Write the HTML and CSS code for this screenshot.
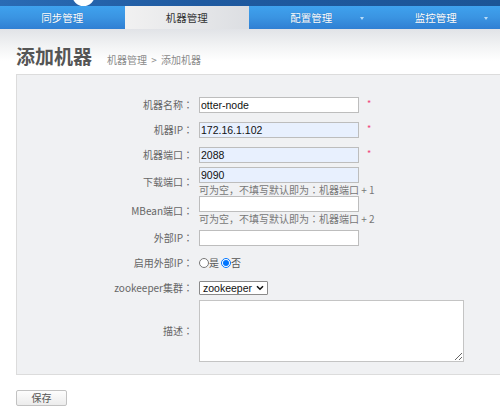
FILE: index.html
```html
<!DOCTYPE html>
<html lang="zh-CN">
<head>
<meta charset="utf-8">
<title>添加机器</title>
<link rel="stylesheet" href="styles.css">
</head>
<body>
<div class="band">
  <span class="logo"></span>
</div>
<nav class="nav">
  <a class="tab">同步管理</a>
  <a class="tab active">机器管理</a>
  <a class="tab drop">配置管理</a>
  <a class="tab drop">监控管理</a>
</nav>
<main class="main">
  <div class="head">
    <h1 class="title">添加机器</h1>
    <span class="crumb">机器管理 &gt; 添加机器</span>
  </div>
  <div class="panel">
    <div class="form">
      <div class="lbl">机器名称<span class="c" lang="zh-TW">：</span></div>
      <div class="fld"><input class="inp" type="text" value="otter-node"><span class="star">*</span></div>

      <div class="lbl">机器IP<span class="c" lang="zh-TW">：</span></div>
      <div class="fld"><input class="inp auto" type="text" value="172.16.1.102"><span class="star">*</span></div>

      <div class="lbl">机器端口<span class="c" lang="zh-TW">：</span></div>
      <div class="fld"><input class="inp auto" type="text" value="2088"><span class="star">*</span></div>

      <div class="lbl">下载端口<span class="c" lang="zh-TW">：</span></div>
      <div class="fld col"><input class="inp auto" type="text" value="9090"><span class="help">可为空，不填写默认即为<span class="c" lang="zh-TW">：</span>机器端口 + 1</span></div>

      <div class="lbl">MBean端口<span class="c" lang="zh-TW">：</span></div>
      <div class="fld col"><input class="inp" type="text" value=""><span class="help">可为空，不填写默认即为<span class="c" lang="zh-TW">：</span>机器端口 + 2</span></div>

      <div class="lbl">外部IP<span class="c" lang="zh-TW">：</span></div>
      <div class="fld"><input class="inp" type="text" value=""></div>

      <div class="lbl">启用外部IP<span class="c" lang="zh-TW">：</span></div>
      <div class="fld radios">
        <label class="opt"><input class="rad" type="radio" name="ext">是</label>
        <label class="opt"><input class="rad" type="radio" name="ext" checked>否</label>
      </div>

      <div class="lbl">zookeeper集群<span class="c" lang="zh-TW">：</span></div>
      <div class="fld">
        <div class="selwrap">
          <select class="sel"><option>zookeeper</option></select>
          <svg class="chev" width="8" height="6" viewBox="0 0 8 6"><path d="M1 1.2 L4 4.2 L7 1.2" fill="none" stroke="#111" stroke-width="1.6"/></svg>
        </div>
      </div>

      <div class="lbl">描述<span class="c" lang="zh-TW">：</span></div>
      <div class="fld"><textarea class="ta"></textarea></div>
    </div>
  </div>
  <div class="actions"><button class="btn" type="button">保存</button></div>
</main>
</body>
</html>
```
FILE: styles.css
```css
* { box-sizing: border-box; }
html, body { margin: 0; padding: 0; }
body {
  font-family: "Noto Sans CJK SC", "Liberation Sans", sans-serif;
  background: #fff;
  color: #555;
  overflow: hidden;
  width: 500px;
}
.band {
  height: 6px;
  background: linear-gradient(90deg, #2a6bb4, #1f5aa0 40%, #1c5596);
  position: relative;
  overflow: hidden;
}
.logo {
  position: absolute;
  left: 72px;
  top: -17px;
  width: 23px;
  height: 23px;
  border-radius: 50%;
  background: #fff;
}
.nav {
  display: flex;
  height: 23px;
  background: linear-gradient(#3fa2ee, #3a94e2 50%, #2f7fd3);
}
.tab {
  width: 124.5px;
  flex: none;
  display: flex;
  align-items: center;
  justify-content: center;
  font-size: 10.5px;
  color: #fff;
  text-shadow: 0 0 1px rgba(0, 40, 100, 0.4);
  position: relative;
}
.tab.active {
  background: linear-gradient(90deg, #f1f1f1, #e7e8ea 50%, #dcdee2);
  color: #333;
  text-shadow: none;
}
.tab.drop::after {
  content: "";
  position: absolute;
  right: 10px;
  top: 11px;
  border-left: 2.5px solid transparent;
  border-right: 2.5px solid transparent;
  border-top: 3px solid #b9dcf8;
}
.main {
  background: linear-gradient(#e1e3e7, #f3f4f5 18px, #fff 32px) no-repeat;
  padding-top: 15px;
}
.head {
  display: flex;
  align-items: baseline;
  gap: 15px;
  padding-left: 16px;
  height: 30px;
}
.title {
  margin: 0;
  font-size: 19px;
  line-height: 24px;
  font-weight: bold;
  color: #555;
}
.crumb {
  font-size: 10px;
  color: #8a8a8a;
  word-spacing: 2px;
}
.panel {
  margin-left: 16px;
  margin-right: -10px;
  background: #f0f1f3;
  border: 1px solid #dcdcdc;
  padding: 17px 0 12px 0;
}
.form {
  display: grid;
  grid-template-columns: 176px 1fr;
  column-gap: 6px;
  grid-auto-rows: minmax(25px, auto);
  align-items: center;
}
.lbl {
  text-align: right;
  font-size: 10px;
  line-height: 14px;
  color: #666;
  white-space: nowrap;
}
.c {
  font-family: "Noto Sans CJK TC", "Noto Sans CJK SC", sans-serif;
}
.fld {
  display: flex;
  align-items: center;
}
.fld.col {
  flex-direction: column;
  align-items: flex-start;
}
.inp {
  width: 160px;
  height: 16px;
  border: 1px solid #bdbdbd;
  background: #fff;
  padding: 0 1px;
  margin: 0;
  font: 10.5px "Liberation Sans", Arial, sans-serif;
  color: #111;
  outline: none;
}
.inp.auto { background: #e8f0fe; }
.star {
  margin-left: 8px;
  color: #f0457a;
  font-size: 9px;
  line-height: 9px;
  position: relative;
  top: -1px;
}
.help {
  font-size: 10px;
  line-height: 13px;
  height: 13px;
  color: #777;
  white-space: nowrap;
}
.radios { gap: 2px; }
.opt {
  display: flex;
  align-items: center;
  font-size: 10px;
  color: #555;
}
.rad {
  width: 10px;
  height: 10px;
  margin: 0;
}
.selwrap {
  position: relative;
  width: 69px;
  height: 14px;
}
.sel {
  -webkit-appearance: none;
  appearance: none;
  width: 69px;
  height: 14px;
  padding: 0 12px 0 3px;
  margin: 0;
  border: 1px solid #8a8a8a;
  border-radius: 1px;
  background: #fff;
  font: 10.5px/12px "Liberation Sans", Arial, sans-serif;
  color: #111;
  display: block;
}
.chev {
  position: absolute;
  right: 4px;
  top: 4px;
  pointer-events: none;
}
.ta {
  width: 265px;
  height: 62px;
  margin: 0;
  border: 1px solid #c4c4c4;
  background: #fff;
  display: block;
}
.actions {
  padding: 8px 0 0 16px;
}
.btn {
  width: 51px;
  height: 16px;
  padding: 0;
  border: 1px solid #c2c2c2;
  border-radius: 2px;
  background: linear-gradient(#fdfdfd, #ececec);
  font: 10px "Noto Sans CJK SC", sans-serif;
  color: #555;
  line-height: 14px;
}
```
